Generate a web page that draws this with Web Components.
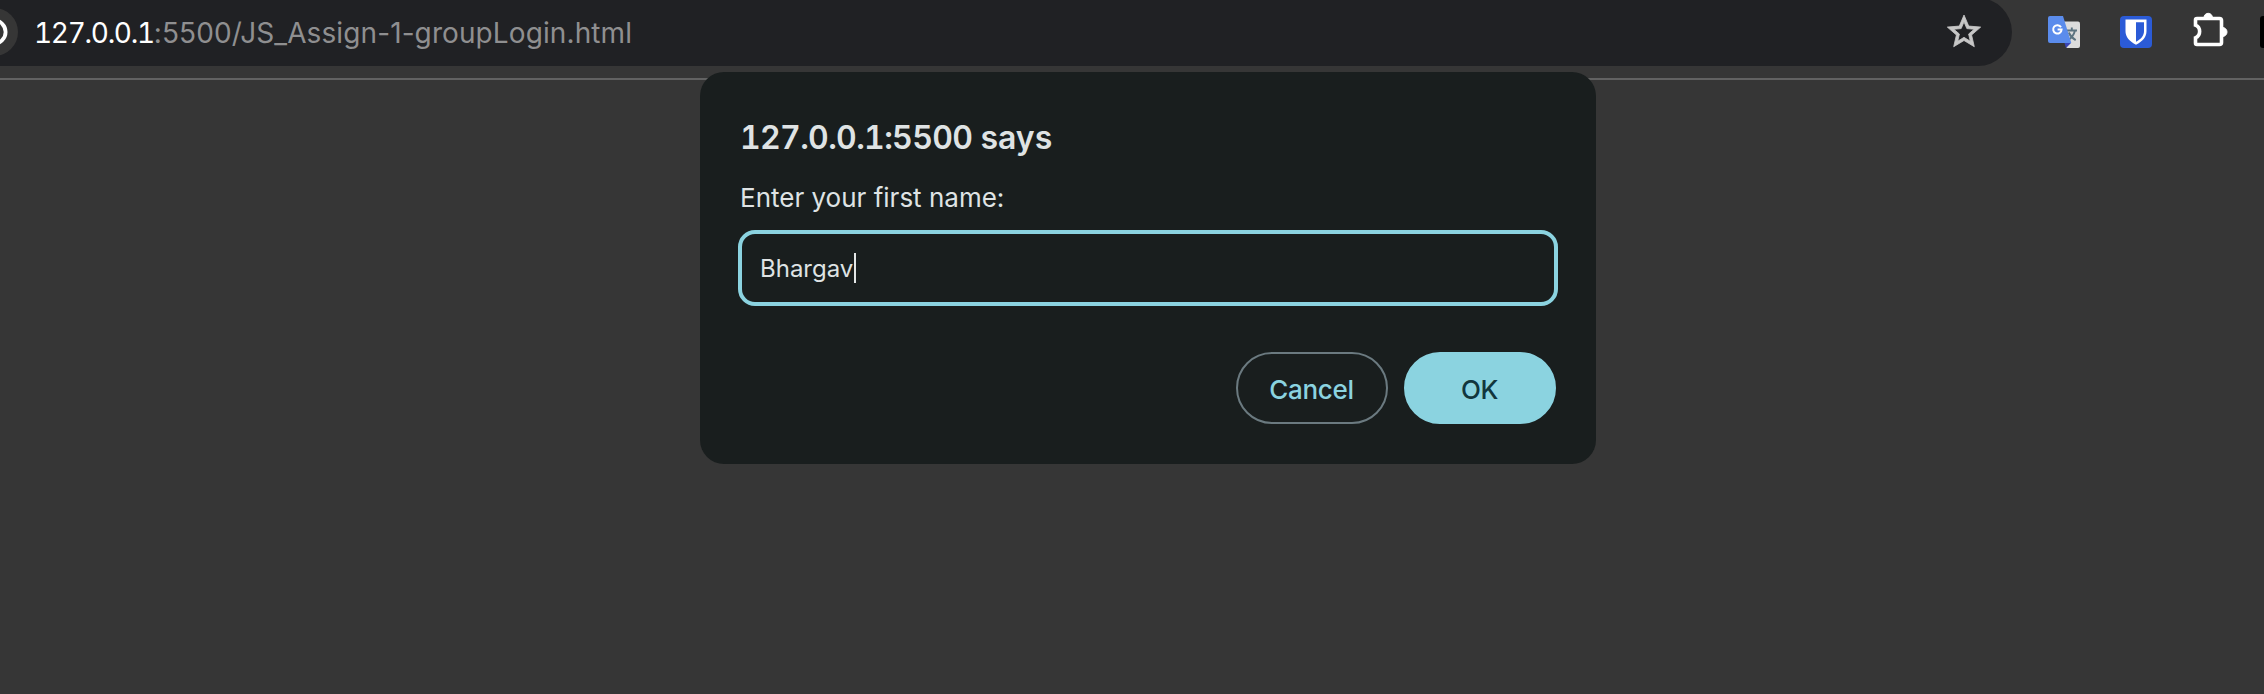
<!DOCTYPE html>
<html lang="en">
<head>
<meta charset="utf-8">
<title>JS_Assign-1-groupLogin</title>
<style>
html,body{margin:0;height:694px;overflow:hidden;background:#363636}
body{font-family:Inter,"Liberation Sans",sans-serif}
</style>
</head>
<body>
<browser-window>
  <address-bar slot="bar" host="127.0.0.1" path=":5500/JS_Assign-1-groupLogin.html"></address-bar>
  <extension-tray slot="bar"></extension-tray>
  <prompt-dialog slot="dialog" host="127.0.0.1:5500" value="Bhargav">
    Enter your first name:
    <pill-button slot="actions" class="cancel">Cancel</pill-button>
    <pill-button slot="actions" primary>OK</pill-button>
  </prompt-dialog>
</browser-window>
<script>
class BaseElement extends HTMLElement {
  constructor() { super(); this.attachShadow({mode: 'open'}); }
  connectedCallback() { this.shadowRoot.innerHTML = this.render(); }
}

customElements.define('browser-window', class extends BaseElement {
  render() { return `
<style>
:host{display:block;position:relative;width:2264px;height:694px;background:#363636;overflow:hidden}
.bar{display:flex;height:78px;align-items:flex-start;border-bottom:2px solid #626262}
.overlay{position:absolute;left:700px;top:72px}
</style>
<div class="bar"><slot name="bar"></slot></div>
<div class="overlay"><slot name="dialog"></slot></div>`; }
});

customElements.define('address-bar', class extends BaseElement {
  render() { return `
<style>
:host{display:flex;flex:none;align-items:center;box-sizing:border-box;width:2012px;height:68px;margin-top:-2px;padding-right:30px;background:#202124;border-radius:0 34px 34px 0;justify-content:space-between}
.left{display:flex;align-items:center}
.info{display:block;width:18px;height:68px}
.url{margin:1px 0 0 16px;font-size:28px;line-height:36px;letter-spacing:.1px;color:#8f8f90;white-space:nowrap}
.url b{font-weight:400;color:#fff;font-variant-numeric:tabular-nums;letter-spacing:-1.3px}
.star{display:block}
</style>
<div class="left">
<svg class="info" viewBox="0 0 18 68"><circle cx="-6" cy="34" r="24" fill="#363636"/><circle cx="-6" cy="34" r="11.600" fill="none" stroke="#fff" stroke-width="3.800"/></svg>
<div class="url"><b>${this.getAttribute('host')}</b><span>${this.getAttribute('path')}</span></div>
</div>
<svg class="star" width="36" height="36" viewBox="0 0 36 36"><path transform="translate(-2 -2.3) scale(1.667)" d="M22 9.24l-7.19-.62L12 2 9.19 8.63 2 9.24l5.46 4.73L5.82 21 12 17.27 18.18 21l-1.63-7.03L22 9.24zM12 15.4l-3.76 2.27 1-4.28-3.32-2.88 4.38-.38L12 6.1l1.71 4.04 4.38.38-3.32 2.88 1 4.28L12 15.4z" fill="#c7c7c7" stroke="#c7c7c7" stroke-width=".5"/></svg>`; }
});

customElements.define('extension-tray', class extends BaseElement {
  render() { return `
<style>
:host{display:flex;flex:none;gap:40px;margin-left:36px;margin-top:16px;height:32px}
svg{display:block;flex:none;overflow:visible}
.more{width:8px;height:32px;background:#000;border-radius:3px 0 0 3px;margin-left:-4px}
</style>
<svg width="32" height="32" viewBox="0 0 32 32">
<path d="M14 5.5h16a2 2 0 0 1 2 2V30a2 2 0 0 1-2 2H18.5z" fill="#dcdcdc"/>
<path d="M16.5 27H23l-5 5z" fill="#3a45b5"/>
<path d="M18.5 14.5h10.5M23.8 11.5v3M27 14.5c-1 4-3.5 7.500-7 9.700M20.700 16.500c1.500 3.200 4 6 7 7.700" fill="none" stroke="#5b7380" stroke-width="1.900"/>
<path d="M2 0h13l8.300 27H2a2 2 0 0 1-2-2V2a2 2 0 0 1 2-2z" fill="#5b8cec"/>
<path d="M13 11.200A4.200 4.200 0 1 0 13.600 13.500H9.600" fill="none" stroke="#fff" stroke-width="2"/>
</svg>
<svg width="32" height="32" viewBox="0 0 32 32"><rect width="32" height="32" rx="4" fill="#2b5bd7"/>
<path d="M5.500 3.500h21V15c0 6-4 10.500-10.500 13.800C9.500 25.500 5.500 21 5.500 15z" fill="#fff"/><path d="M16 6.300h8V15c0 4.800-3 8-8 10.700z" fill="#2b5bd7"/></svg>
<svg width="32" height="32" viewBox="0 0 32 32"><path transform="translate(1 0)" d="M4 2.500H26.500A2 2 0 0 1 28.500 4.500V26.500A2 2 0 0 1 26.500 28.500H4A1.500 1.500 0 0 1 2.500 27V21.800C8 19.500 8 11.500 2.500 9.200V4A1.500 1.500 0 0 1 4 2.500z" fill="none" stroke="#fff" stroke-width="3.600"/><path d="M12 1.500a4.200 4.200 0 0 1 8.400 0zM30.500 11.500a4.500 4.500 0 0 1 0 9z" fill="#fff" stroke="#fff"/></svg>
<div class="more"></div>`; }
});

customElements.define('prompt-dialog', class extends BaseElement {
  render() { return `
<style>
:host{display:flex;flex-direction:column;box-sizing:border-box;width:896px;height:392px;padding:46px 38px 40px;border-radius:24px;background:#191e1e;color:#dfe3e4;white-space:nowrap}
.title{margin-left:2px;font-size:32px;line-height:40px;font-weight:560}
.title b{font-weight:inherit;font-variant-numeric:tabular-nums;letter-spacing:-.65px}
.label{margin:24px 0 0 2px;font-size:26px;line-height:32px;height:32px;white-space:normal}
.field{display:flex;align-items:center;box-sizing:border-box;height:76px;margin-top:16px;padding-left:18px;border:4px solid #8bd3e0;border-radius:17px;font-size:24px}
.caret{width:2px;height:30px;margin-left:1px;background:#e3e6e6}
.actions{display:flex;justify-content:flex-end;gap:16px;margin:46px 2px 0 0}
</style>
<div class="title"><b>${this.getAttribute('host')}</b> says</div>
<div class="label"><slot></slot></div>
<div class="field"><span>${this.getAttribute('value')}</span><i class="caret"></i></div>
<div class="actions"><slot name="actions"></slot></div>`; }
});

customElements.define('pill-button', class extends BaseElement {
  render() { return `
<style>
:host{display:flex;align-items:center;justify-content:center;box-sizing:border-box;width:152px;height:72px;border:2px solid #6b7a80;border-radius:36px;padding:2px 1px 0 0;font-size:26px;font-weight:550;letter-spacing:-.3px;color:#8bd3e0}
:host([primary]){background:#8bd3e0;border-color:#8bd3e0;color:#12363d}
</style>
<slot></slot>`; }
});
</script>
</body>
</html>
